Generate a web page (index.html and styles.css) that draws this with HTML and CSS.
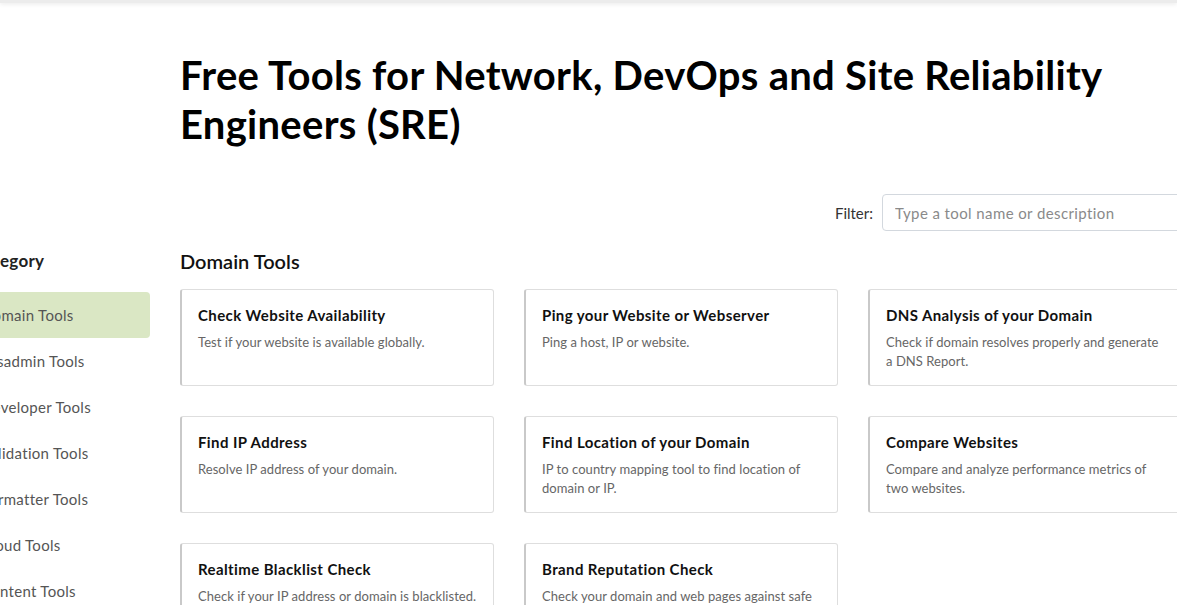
FILE: index.html
```html
<!DOCTYPE html>
<html lang="en">
<head>
<meta charset="utf-8">
<title>Free Tools</title>
<link rel="stylesheet" href="styles.css">
</head>
<body>
<div class="topbar"></div>
<div class="page">
  <h1 class="title">Free Tools for Network, DevOps and Site Reliability Engineers (SRE)</h1>
  <div class="filter-row">
    <label class="filter-label" for="f">Filter:</label>
    <input id="f" class="filter-input" type="text" placeholder="Type a tool name or description">
  </div>
  <div class="layout">
    <aside class="sidebar">
      <h3 class="side-title">Category</h3>
      <ul class="side-list">
        <li class="side-item active">Domain Tools</li>
        <li class="side-item">Sysadmin Tools</li>
        <li class="side-item">Developer Tools</li>
        <li class="side-item">Validation Tools</li>
        <li class="side-item">Formatter Tools</li>
        <li class="side-item">Cloud Tools</li>
        <li class="side-item">Content Tools</li>
      </ul>
    </aside>
    <main class="main">
      <h2 class="section-title">Domain Tools</h2>
      <div class="cards">
        <div class="card"><div class="card-title">Check Website Availability</div><div class="card-desc">Test if your website is available globally.</div></div>
        <div class="card"><div class="card-title">Ping your Website or Webserver</div><div class="card-desc">Ping a host, IP or website.</div></div>
        <div class="card"><div class="card-title">DNS Analysis of your Domain</div><div class="card-desc">Check if domain resolves properly and generate a DNS Report.</div></div>
        <div class="card"><div class="card-title">Find IP Address</div><div class="card-desc">Resolve IP address of your domain.</div></div>
        <div class="card"><div class="card-title">Find Location of your Domain</div><div class="card-desc">IP to country mapping tool to find location of domain or IP.</div></div>
        <div class="card"><div class="card-title">Compare Websites</div><div class="card-desc">Compare and analyze performance metrics of two websites.</div></div>
        <div class="card"><div class="card-title">Realtime Blacklist Check</div><div class="card-desc">Check if your IP address or domain is blacklisted.</div></div>
        <div class="card"><div class="card-title">Brand Reputation Check</div><div class="card-desc">Check your domain and web pages against safe browsing lists.</div></div>
      </div>
    </main>
  </div>
</div>
</body>
</html>
```
FILE: styles.css
```css
html, body {
  margin: 0;
  padding: 0;
  overflow: hidden;
  background: #fff;
}
body {
  font-family: "Lato", "Liberation Sans", sans-serif;
  color: #111;
}
.topbar {
  height: 3px;
  background: #ececec;
  box-shadow: 0 1px 4px rgba(0,0,0,0.10);
}
.page {
  width: 1002px;
  margin-left: 180px;
}
.title {
  margin: 48px 0 0;
  font-size: 40px;
  line-height: 49px;
  font-weight: 700;
  letter-spacing: 0.28px;
  color: #000;
}
.filter-row {
  display: flex;
  justify-content: flex-end;
  align-items: center;
  gap: 9px;
  margin-top: 45px;
}
.filter-label {
  font-size: 15px;
  color: #333;
}
.filter-input {
  box-sizing: border-box;
  width: 300px;
  height: 37px;
  border: 1px solid #d3d8de;
  border-radius: 4px;
  padding: 0 12px;
  font-family: inherit;
  font-size: 15px;
  letter-spacing: 0.4px;
  color: #333;
  outline: none;
}
.filter-input::placeholder { color: #8a8a8a; }
.layout {
  display: grid;
  grid-template-columns: 185px 1002px;
  column-gap: 30px;
  margin-left: -215px;
  margin-top: 18px;
}
.side-title {
  margin: 0 0 19px 8px;
  font-size: 17px;
  line-height: 24px;
  font-weight: 700;
  letter-spacing: 0.3px;
  color: #222;
}
.side-list {
  list-style: none;
  margin: 0;
  padding: 0;
}
.side-item {
  height: 46px;
  line-height: 46px;
  padding-left: 16px;
  font-size: 15px;
  letter-spacing: 0.3px;
  color: #555;
  border-radius: 4px;
}
.side-item.active {
  background: #dae7c4;
}
.section-title {
  margin: 0 0 16px;
  font-size: 20px;
  line-height: 24px;
  font-weight: 600;
  color: #111;
}
.cards {
  display: grid;
  grid-template-columns: repeat(3, 314px);
  grid-auto-rows: 97px;
  gap: 30px;
}
.card {
  box-sizing: border-box;
  border: 1px solid #dedede;
  border-left: 2px solid #c9c9c9;
  border-radius: 3px;
  padding: 15px 16px;
}
.card-title {
  font-size: 15px;
  line-height: 20px;
  font-weight: 700;
  letter-spacing: 0.4px;
  color: #111;
}
.card-desc {
  margin-top: 8px;
  font-size: 13px;
  line-height: 19px;
  letter-spacing: 0.05px;
  color: #666;
}
```
